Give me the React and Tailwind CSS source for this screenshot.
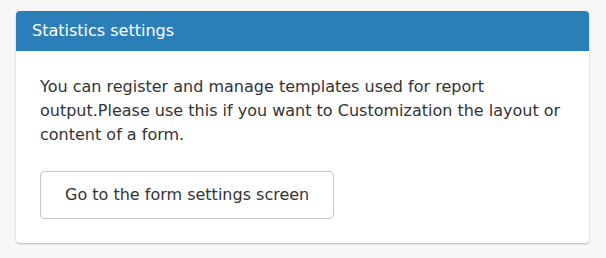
export default function App() {
  return (
    <div className="min-h-screen bg-[#f7f7f7] pt-[11px] pl-4 pr-[17px] font-['DejaVu_Sans',sans-serif]">
      <section className="bg-white rounded-[4px] shadow-[0_1px_2px_rgba(0,0,0,0.25)] overflow-hidden">
        <header className="h-10 bg-[#2a7fb8] px-4 flex items-center text-white text-base">
          Statistics settings
        </header>
        <div className="px-6 pt-6 pb-6 text-[#333] text-base">
          <p className="leading-6">
            You can register and manage templates used for report output.Please use this if you want to Customization the layout or content of a form.
          </p>
          <button className="mt-6 h-12 px-6 border border-[#c8c8c8] rounded-[4px] bg-white text-[#333] text-base">
            Go to the form settings screen
          </button>
        </div>
      </section>
    </div>
  );
}
